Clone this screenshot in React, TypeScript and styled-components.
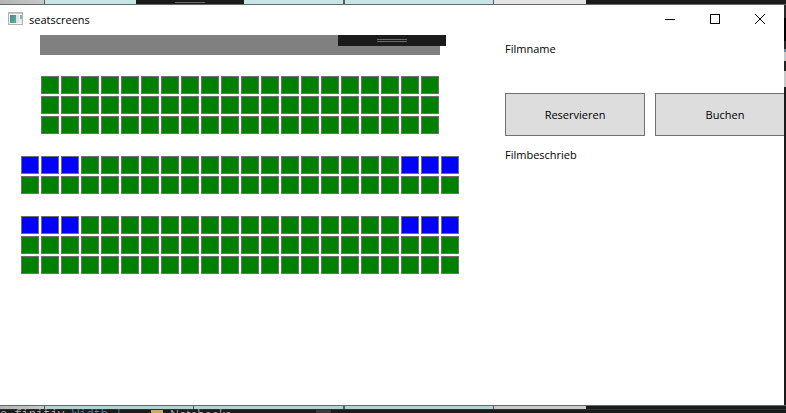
import React from "react";
import styled, { createGlobalStyle } from "styled-components";

const GlobalStyle = createGlobalStyle`
  *, *::before, *::after { box-sizing: border-box; }
  html, body, #root { height: 100%; }
  body {
    margin: 0;
    overflow: hidden;
    background: #1b1b1c;
    color: #000;
    font: 11px/16px "Open Sans", "Noto Sans", sans-serif;
  }
`;

const Desktop = styled.div`
  display: grid;
  grid-template-rows: 5px minmax(0, 1fr) 8px;
  height: 100%;
  overflow: hidden;
`;

const Strip = styled.div<{ $edge: "top" | "bottom" }>`
  display: flex;
  height: 5px;
  border-${(p) => (p.$edge === "top" ? "bottom" : "top")}: 1px solid #5f6b6b;
  ${(p) => p.$edge === "bottom" && "border-bottom: 1px solid #2b3030;"}
`;

const tones = {
  grey: "linear-gradient(90deg, #b4b4b4, #c8c8c8)",
  teal: "#c6e6e6",
  tealDim: "#b0d4d4",
  light: "#e4e4e4",
  lightDim: "#cacaca",
  dark: "#1b1b1c",
};

const Segment = styled.div<{ $basis: number; $tone: keyof typeof tones; $divider?: number }>`
  flex: 0 1 ${(p) => p.$basis}px;
  background: ${(p) => tones[p.$tone]};
  border-right: ${(p) => p.$divider ?? 0}px solid #5a5a5a;
  overflow: hidden;

  &:last-child {
    flex: 1 0 0;
  }
`;

const Grip = styled.div`
  width: 30px;
  height: 3px;
  margin: 2px auto 0;
  border: solid #6a6a6a;
  border-width: 1px 0;
`;

const Middle = styled.div`
  display: grid;
  grid-template-columns: minmax(0, 1fr) 2px;
`;

const Window = styled.main`
  display: flex;
  flex-direction: column;
  min-width: 0;
  overflow: hidden;
  background: #fff;
`;

const SideEdge = styled.div`
  background: linear-gradient(#2a2a2a 0 13px, #000 13px 36px, #262626 36px 44px, #5c8cb0 44px 47px, #c8c8c8 47px 56px, #222 56px 66px, #c8c8c8 66px 82px, #1b1b1c 82px);
`;

const TitleBar = styled.header`
  display: flex;
  align-items: center;
  height: 30px;
  padding: 0 2px 0 8px;
`;

const Title = styled.h1`
  flex: 1;
  margin: 0 0 0 5px;
  font-size: 11px;
  font-weight: 400;
`;

const CaptionButton = styled.button`
  display: grid;
  place-items: center;
  width: 45px;
  height: 30px;
  padding: 0 0 2px;
  border: 0;
  background: transparent;
`;

const Content = styled.div`
  display: grid;
  grid-template-columns: 480px minmax(0, 1fr);
  flex: 1;
  min-height: 0;
`;

const Hall = styled.section`
  display: flex;
  flex-direction: column;
  align-items: center;
`;

const Screen = styled.div`
  position: relative;
  width: 400px;
  height: 20px;
  margin-bottom: 21px;
  background: #808080;
`;

const DockTab = styled.div`
  position: absolute;
  top: 0;
  right: -6px;
  width: 108px;
  height: 11px;
  padding-top: 2px;
  background: #1b1b1c;
`;

const Block = styled.div`
  display: grid;
  gap: 2px;
  margin-bottom: 22px;
`;

const SeatRow = styled.div`
  display: flex;
  justify-content: center;
  gap: 2px;
`;

const Seat = styled.button<{ $premium: boolean }>`
  width: 18px;
  height: 18px;
  padding: 0;
  border: 1px solid #707070;
  background: ${(p) => (p.$premium ? "#0000ff" : "#008000")};
`;

const Details = styled.section`
  display: flex;
  flex-direction: column;
  min-width: 0;
  padding: 6px 0 0 25px;
`;

const Text = styled.p`
  margin: 0;
`;

const Actions = styled.div`
  display: flex;
  gap: 10px;
  margin: 36px 0 11px;
`;

const ActionButton = styled.button`
  flex: none;
  width: 140px;
  height: 43px;
  border: 1px solid #707070;
  background: #ddd;
  color: #000;
  font: inherit;
`;

const Below = styled.footer`
  overflow: hidden;
`;

const Editor = styled.div`
  display: flex;
  color: #a8a8a8;
  font-size: 12px;
  line-height: 10px;
`;

const Code = styled.span`
  width: 151px;
  color: #4f7f98;
  font-family: "Liberation Mono", monospace;
  white-space: pre;
`;

const Keyword = styled.span`
  color: #a8a8a8;
`;

const Folder = styled.span`
  width: 12px;
  height: 8px;
  margin-right: 7px;
  background: #c8ac5c;
`;

const ScrollThumb = styled.span`
  width: 15px;
  height: 8px;
  margin-left: 85px;
  background: #3a3a3c;
`;

type RowSpec = { count: number; premium: boolean };

const blocks: RowSpec[][] = [
  Array.from({ length: 3 }, () => ({ count: 20, premium: false })),
  [{ count: 22, premium: true }, { count: 22, premium: false }],
  [
    { count: 22, premium: true },
    { count: 22, premium: false },
    { count: 22, premium: false },
  ],
];

const isPremium = (row: RowSpec, i: number) => row.premium && (i < 3 || i >= row.count - 3);

const AppIcon = () => (
  <svg width="16" height="16" viewBox="0 0 16 16" aria-hidden="true">
    <defs>
      <linearGradient id="pane" x1="0" y1="0" x2="1" y2="1">
        <stop offset="0" stopColor="#4a7fa8" />
        <stop offset="1" stopColor="#5cb87c" />
      </linearGradient>
    </defs>
    <rect x="0.5" y="0.5" width="14" height="12" fill="#f4f5f7" stroke="#aeb3ba" />
    <path d="M1 1.5h13" stroke="#c9cdd3" />
    <rect x="2" y="3" width="6" height="8" fill="url(#pane)" />
    <rect x="8" y="3" width="3" height="8" fill="#dfe2e6" />
    <rect x="12" y="3" width="2" height="4" fill="#7fb3a6" />
    <rect x="12" y="7" width="2" height="4" fill="#e6e8ea" />
  </svg>
);

export default function App() {
  return (
    <Desktop>
      <GlobalStyle />
      <Strip $edge="top">
        <Segment $basis={45} $tone="grey" $divider={1} />
        <Segment $basis={91} $tone="teal" />
        <Segment $basis={108} $tone="dark"><Grip /></Segment>
        <Segment $basis={101} $tone="teal" $divider={2} />
        <Segment $basis={149} $tone="teal" $divider={1} />
        <Segment $basis={92} $tone="light" />
        <Segment $basis={200} $tone="dark" />
      </Strip>
      <Middle>
        <Window>
          <TitleBar>
            <AppIcon />
            <Title>seatscreens</Title>
            <CaptionButton aria-label="Minimieren">
              <svg width="10" height="10"><path d="M0 5.5h10" stroke="#000" /></svg>
            </CaptionButton>
            <CaptionButton aria-label="Maximieren">
              <svg width="10" height="10"><rect x="0.5" y="0.5" width="9" height="9" fill="none" stroke="#000" /></svg>
            </CaptionButton>
            <CaptionButton aria-label="Schließen">
              <svg width="10" height="10"><path d="M0 0l10 10M10 0L0 10" stroke="#000" /></svg>
            </CaptionButton>
          </TitleBar>
          <Content>
            <Hall aria-label="Saalplan">
              <Screen><DockTab><Grip /></DockTab></Screen>
              {blocks.map((rows, b) => (
                <Block key={b}>
                  {rows.map((row, r) => (
                    <SeatRow key={r}>
                      {Array.from({ length: row.count }, (_, i) => (
                        <Seat key={i} $premium={isPremium(row, i)} aria-label={`Platz ${i + 1}`} />
                      ))}
                    </SeatRow>
                  ))}
                </Block>
              ))}
            </Hall>
            <Details>
              <Text>Filmname</Text>
              <Actions>
                <ActionButton>Reservieren</ActionButton>
                <ActionButton>Buchen</ActionButton>
              </Actions>
              <Text>Filmbeschrieb</Text>
            </Details>
          </Content>
        </Window>
        <SideEdge />
      </Middle>
      <Below>
        <Strip $edge="bottom">
          <Segment $basis={45} $tone="grey" $divider={1} />
          <Segment $basis={149} $tone="tealDim" $divider={1} />
          <Segment $basis={151} $tone="tealDim" $divider={2} />
          <Segment $basis={149} $tone="tealDim" $divider={1} />
          <Segment $basis={92} $tone="lightDim" />
          <Segment $basis={200} $tone="dark" />
        </Strip>
        <Editor>
          <Code><Keyword>o finitiv </Keyword>Width |</Code>
          <Folder />
          <span>Notebooks</span>
          <ScrollThumb />
        </Editor>
      </Below>
    </Desktop>
  );
}
